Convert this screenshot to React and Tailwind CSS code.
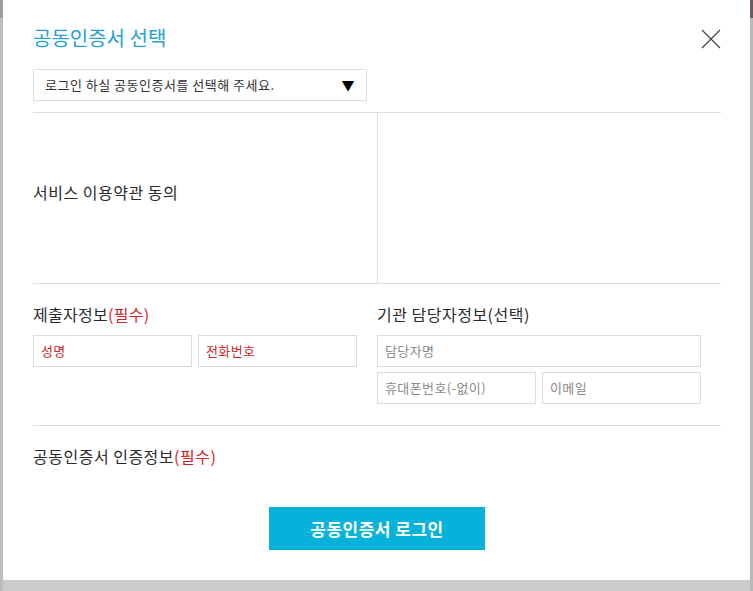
import React from "react";

const font = { fontFamily: '"Noto Sans CJK KR", "Noto Sans", sans-serif' };

function Input({ placeholder, className = "", red = false }) {
  return (
    <div
      className={`h-[32px] border border-[#dcdcdc] flex items-center px-[7px] text-[13px] tracking-[0.4px] ${
        red ? "text-[#c8282e]" : "text-[#8a8a8a]"
      } ${className}`}
    >
      {placeholder}
    </div>
  );
}

export default function App() {
  return (
    <div className="w-[753px] h-[591px] bg-[#cbcbcb] overflow-hidden flex" style={font}>
      <div className="w-[3px] h-full flex flex-col">
        <div className="h-[18px] bg-[#9e9e9e]" />
        <div className="flex-1 bg-[#bdbdbd]" />
      </div>
      <div className="w-[747px] h-[580px] bg-white pl-[30px] pr-[29px] pt-[22px] flex flex-col">
        <div className="flex items-center justify-between h-[32px]">
          <h1 className="text-[20px] text-[#2a9fd2] leading-none tracking-[0px]">공동인증서 선택</h1>
          <svg width="20" height="20" viewBox="0 0 20 20" className="mt-[2px]">
            <path d="M1 1 L19 19 M19 1 L1 19" stroke="#444" strokeWidth="1.2" />
          </svg>
        </div>
        <div className="mt-[15px] w-[334px] h-[32px] border border-[#dcdcdc] flex items-center justify-between pl-[11px] pr-[11px] text-[13px] tracking-[0.5px] text-[#333]">
          <span>로그인 하실 공동인증서를 선택해 주세요.</span>
          <span className="text-[13px] text-black">▼</span>
        </div>
        <div className="mt-[11px] border-t border-b border-[#dedede] h-[172px] flex">
          <div className="w-[345px] border-r border-[#dedede] flex items-center pb-[12px]">
            <span className="text-[16px] tracking-[0.5px] text-[#2b2b2b]">서비스 이용약관 동의</span>
          </div>
          <div className="flex-1" />
        </div>
        <div className="flex pb-[21px] border-b border-[#dedede]">
          <div className="w-[344px]">
            <div className="mt-[19px] text-[16px] tracking-[0.3px] text-[#2b2b2b] leading-[22px]">
              제출자정보<span className="text-[#d0232b]">(필수)</span>
            </div>
            <div className="mt-[10px] flex gap-[6px]">
              <Input placeholder="성명" red className="w-[159px]" />
              <Input placeholder="전화번호" red className="w-[159px]" />
            </div>
          </div>
          <div className="flex-1">
            <div className="mt-[19px] text-[16px] tracking-[0.5px] text-[#2b2b2b] leading-[22px]">기관 담당자정보(선택)</div>
            <div className="mt-[10px] flex flex-col gap-[5px]">
              <Input placeholder="담당자명" className="w-[324px]" />
              <div className="flex gap-[6px]">
                <Input placeholder="휴대폰번호(-없이)" className="w-[159px]" />
                <Input placeholder="이메일" className="w-[159px]" />
              </div>
            </div>
          </div>
        </div>
        <div className="mt-[19px] text-[16px] tracking-[0.5px] text-[#2b2b2b] leading-[22px]">
          공동인증서 인증정보<span className="text-[#d0232b]">(필수)</span>
        </div>
        <div className="mt-[40px] flex justify-center">
          <button className="w-[216px] h-[43px] bg-[#04b2da] text-white text-[17px] tracking-[0.5px] font-bold">
            공동인증서 로그인
          </button>
        </div>
      </div>
      <div className="w-[3px] h-full flex flex-col">
        <div className="h-[18px] bg-[#6b5b5f]" />
        <div className="flex-1 bg-[#b8b8b8]" />
      </div>
    </div>
  );
}
